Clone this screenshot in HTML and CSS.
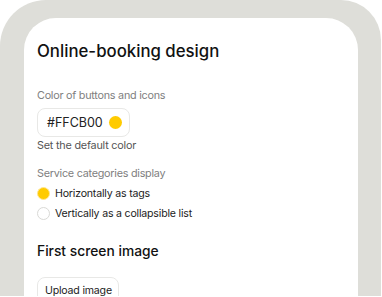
FILE: index.html
```html
<!DOCTYPE html>
<html>
<head>
<meta charset="utf-8">
<link rel="stylesheet" href="styles.css">
</head>
<body>
<div class="frame">
  <div class="panel">
    <h1 class="title">Online-booking design</h1>
    <div class="label">Color of buttons and icons</div>
    <div class="color-input">
      <span class="hex">#FFCB00</span>
      <span class="swatch"></span>
    </div>
    <div class="link">Set the default color</div>
    <div class="label label-2">Service categories display</div>
    <div class="radio-row">
      <span class="radio radio-on"></span>
      <span class="radio-text">Horizontally as tags</span>
    </div>
    <div class="radio-row">
      <span class="radio"></span>
      <span class="radio-text">Vertically as a collapsible list</span>
    </div>
    <h2 class="subtitle">First screen image</h2>
    <div class="upload">Upload image</div>
  </div>
</div>
</body>
</html>
```
FILE: styles.css
```css
html, body {
  margin: 0;
  padding: 0;
  background: #ffffff;
  overflow: hidden;
}
body {
  width: 382px;
  height: 297px;
  font-family: Inter, "Noto Sans", sans-serif;
}
.frame {
  width: 381px;
  height: 296px;
  background: #deded9;
  border-radius: 46px 40px 0 0;
  padding: 18px 23px 0 24px;
  box-sizing: border-box;
  overflow: hidden;
}
.panel {
  background: #ffffff;
  height: 300px;
  border-radius: 32px 32px 0 0;
  padding: 22px 14px 0 13px;
  box-sizing: border-box;
}
.title {
  margin: 0;
  font-size: 16.8px;
  font-weight: 500;
  color: #111;
  line-height: 22px;
}
.label {
  margin-top: 27px;
  font-size: 10.8px;
  letter-spacing: -0.25px;
  color: #808080;
  line-height: 14px;
}
.label-2 {
  margin-top: 14px;
}
.color-input {
  margin-top: 5px;
  width: 93px;
  height: 29px;
  box-sizing: border-box;
  border: 1px solid #e8e8e6;
  border-radius: 8px;
  display: flex;
  align-items: center;
  justify-content: space-between;
  padding: 0 7px 0 9px;
}
.hex {
  font-size: 12.5px;
  color: #222;
}
.swatch {
  width: 13px;
  height: 13px;
  border-radius: 50%;
  background: #ffcb00;
}
.link {
  margin-top: 2px;
  font-size: 10.8px;
  letter-spacing: -0.2px;
  color: #555;
  line-height: 14px;
}
.radio-row {
  display: flex;
  align-items: center;
  gap: 5px;
  margin-top: 5px;
  height: 14px;
}
.radio-row + .radio-row {
  margin-top: 6px;
}
.radio {
  width: 11px;
  height: 11px;
  border-radius: 50%;
  border: 1px solid #d9d9d6;
  background: #fff;
  flex: none;
}
.radio-on {
  background: #ffcb00;
  border-color: #ffe690;
}
.radio-text {
  font-size: 10.6px;
  letter-spacing: -0.2px;
  color: #222;
}
.subtitle {
  margin: 22px 0 0 0;
  font-size: 13.8px;
  font-weight: 500;
  color: #111;
  line-height: 18px;
}
.upload {
  margin-top: 17px;
  display: inline-block;
  border: 1px solid #e8e8e6;
  border-radius: 8px;
  padding: 6px 6px 10px 7px;
  font-size: 10.6px;
  letter-spacing: -0.2px;
  color: #222;
  line-height: 14px;
}
```
